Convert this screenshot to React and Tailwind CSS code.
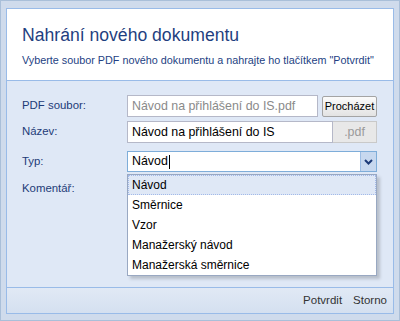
import React from "react";

const font = { fontFamily: '"Liberation Sans", Arial, sans-serif' };

const items = ["Návod", "Směrnice", "Vzor", "Manažerský návod", "Manažerská směrnice"];

const App = () => {
  return (
    <div
      className="w-[400px] h-[321px] bg-[#cfdbec] border border-[#a9bfd9] pt-[7px] pl-[5px] pr-[5px] pb-[6px]"
      style={font}
    >
      <div className="h-full border border-[#99bbe8] flex flex-col">
        <div className="h-[72px] bg-white border-b border-[#99bbe8] pt-[16px] pl-[15px]">
          <div className="text-[17.6px] leading-[20px] text-[#1f3f7f]">Nahrání nového dokumentu</div>
          <div className="text-[10.8px] leading-[14px] mt-[8px] text-[#243f83] whitespace-nowrap">
            Vyberte soubor PDF nového dokumentu a nahrajte ho tlačítkem "Potvrdit"
          </div>
        </div>
        <div className="flex-1 bg-[#dfe8f6] pt-[14px] pl-[15px] relative">
          <div className="flex items-center h-[22px]">
            <div className="w-[105px] text-[11.4px] text-[#1d3b78]">PDF soubor:</div>
            <div className="w-[191px] h-[22px] bg-white border border-[#b5b8c8] px-[4px] text-[12.4px] leading-[20px] text-[#8a8a8a] whitespace-nowrap">
              Návod na přihlášení do IS.pdf
            </div>
            <div className="ml-[4px] w-[55px] h-[21px] border border-[#a4a4a4] rounded-[2px] bg-gradient-to-b from-[#fbfbfb] to-[#e3e3e3] text-[11px] leading-[19px] text-black text-center">
              Procházet
            </div>
          </div>
          <div className="flex items-center h-[22px] mt-[4px]">
            <div className="w-[105px] text-[11.4px] text-[#1d3b78]">Název:</div>
            <div className="w-[206px] h-[22px] bg-white border border-[#b5b8c8] px-[4px] text-[12.4px] leading-[20px] text-black">
              Návod na přihlášení do IS
            </div>
            <div className="w-[44px] h-[22px] bg-[#e8e8e8] border border-l-0 border-[#c9c9c9] text-[12.4px] leading-[20px] text-[#9a9a9a] text-center">
              .pdf
            </div>
          </div>
          <div className="flex items-center h-[21px] mt-[8px]">
            <div className="w-[105px] text-[11.4px] text-[#1d3b78]">Typ:</div>
            <div className="w-[250px] h-[21px] flex bg-white border border-[#7eadd9]">
              <div className="flex-1 px-[4px] text-[12.4px] leading-[19px] text-black flex items-center">
                Návod<span className="w-[1px] h-[14px] bg-black ml-[1px]"></span>
              </div>
              <div className="w-[16px] h-full bg-[#c7d8ef] border-l border-[#9dbde4] flex items-center justify-center">
                <svg width="9" height="6" viewBox="0 0 9 6">
                  <path d="M1 1 L4.5 4.5 L8 1" stroke="#1c3a78" strokeWidth="2" fill="none" />
                </svg>
              </div>
            </div>
          </div>
          <div className="flex h-[20px] mt-[6px]">
            <div className="w-[105px] text-[11.4px] text-[#1d3b78] leading-[20px]">Komentář:</div>
          </div>
          <div className="absolute left-[120px] top-[93px] w-[250px] bg-white border border-[#99a8c2] shadow-[3px_3px_3px_rgba(0,0,0,0.18)]">
            {items.map((it, i) => (
              <div
                key={it}
                className={
                  i === 0
                    ? "h-[20px] px-[3px] text-[12px] leading-[18px] text-black bg-[#dfe8f6] border border-dotted border-[#a3bae9]"
                    : "h-[20px] px-[4px] text-[12px] leading-[20px] text-black"
                }
              >
                {it}
              </div>
            ))}
          </div>
        </div>
        <div className="h-[26px] border-t border-[#99bbe8] bg-gradient-to-b from-[#e1e9f5] to-[#d4e0f0] flex items-center justify-end pr-[6px] gap-[11px] text-[11.5px] text-[#333333]">
          <span>Potvrdit</span>
          <span>Storno</span>
        </div>
      </div>
    </div>
  );
};

export default App;
